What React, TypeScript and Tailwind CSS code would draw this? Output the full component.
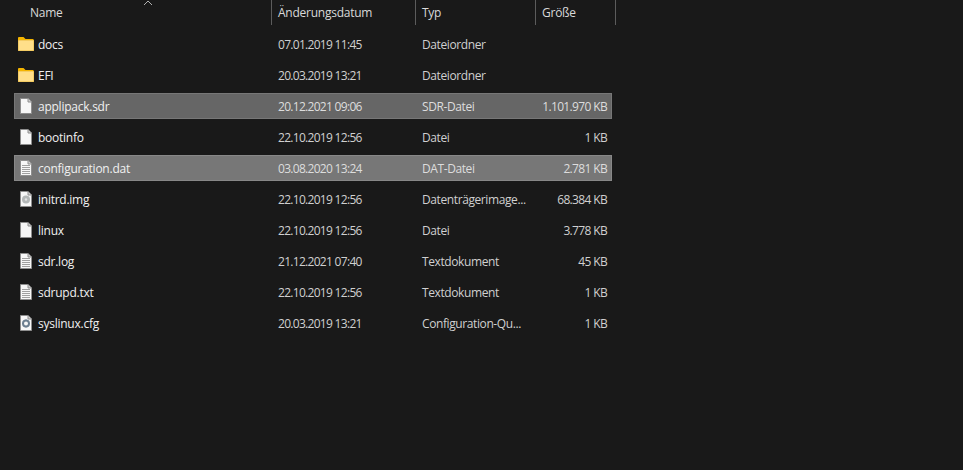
const rows = [
  { name: "docs", date: "07.01.2019 11:45", type: "Dateiordner", size: "", icon: "folder" },
  { name: "EFI", date: "20.03.2019 13:21", type: "Dateiordner", size: "", icon: "folder" },
  { name: "applipack.sdr", date: "20.12.2021 09:06", type: "SDR-Datei", size: "1.101.970 KB", icon: "file", selected: "dark" },
  { name: "bootinfo", date: "22.10.2019 12:56", type: "Datei", size: "1 KB", icon: "file" },
  { name: "configuration.dat", date: "03.08.2020 13:24", type: "DAT-Datei", size: "2.781 KB", icon: "text", selected: "light" },
  { name: "initrd.img", date: "22.10.2019 12:56", type: "Datenträgerimage...", size: "68.384 KB", icon: "disc" },
  { name: "linux", date: "22.10.2019 12:56", type: "Datei", size: "3.778 KB", icon: "file" },
  { name: "sdr.log", date: "21.12.2021 07:40", type: "Textdokument", size: "45 KB", icon: "text" },
  { name: "sdrupd.txt", date: "22.10.2019 12:56", type: "Textdokument", size: "1 KB", icon: "text" },
  { name: "syslinux.cfg", date: "20.03.2019 13:21", type: "Configuration-Qu...", size: "1 KB", icon: "cfg" },
];

function FileIcon({ kind }: { kind: string }) {
  if (kind === "folder") {
    return (
      <svg width="16" height="14" viewBox="0 0 16 14">
        <path d="M0 1 L0.5 0 H5.5 L7.5 2 H15 L16 3 V4 H0 Z" fill="#f4b400" />
        <rect x="0" y="3" width="16" height="11" rx="0.5" fill="#e8b83e" />
        <rect x="0.5" y="3.5" width="15" height="10" fill="#ffdf8a" />
      </svg>
    );
  }
  return (
    <svg width="12" height="16" viewBox="0 0 12 16">
      <path d="M0.5 0.5 H8 L11.5 4 V15.5 H0.5 Z" fill="#f7f7f7" stroke="#8e8e8e" />
      <path d="M8 0.5 V4 H11.5" fill="#d0d0d0" stroke="#8e8e8e" />
      {kind === "text" && (
        <path d="M2 5.5 H10 M2 7.5 H10 M2 9.5 H10 M2 11.5 H10 M2 13.5 H10" stroke="#a0a0a0" strokeWidth="1" />
      )}
      {kind === "disc" && (
        <>
          <circle cx="6" cy="8.5" r="4" fill="#b4b8b8" />
          <circle cx="6" cy="8.5" r="1.2" fill="#e4e4e4" />
        </>
      )}
      {kind === "cfg" && (
        <>
          <circle cx="6" cy="8.5" r="3" fill="none" stroke="#6d7f90" strokeWidth="2" />
          <path d="M6 4.5 V6 M6 11 V12.5 M2 8.5 H3.5 M8.5 8.5 H10" stroke="#6d7f90" strokeWidth="1.2" />
        </>
      )}
    </svg>
  );
}

function HeaderCell({ label, width }: { label: string; width: string }) {
  return (
    <div className={`${width} h-[25px] flex items-center pl-[6px] pt-px border-r border-[#5c5c5c]`}>
      {label}
    </div>
  );
}

export default function App() {
  return (
    <div className="relative w-[963px] h-[470px] bg-[#191919] overflow-hidden text-[12px] font-['Open_Sans',sans-serif] tracking-[-0.25px] text-[#f0f0f0]">
      <div className="flex text-[#d9d9d9] pl-[24px]">
        <HeaderCell label="Name" width="w-[248px]" />
        <HeaderCell label="Änderungsdatum" width="w-[144px]" />
        <HeaderCell label="Typ" width="w-[120px]" />
        <HeaderCell label="Größe" width="w-[80px]" />
      </div>
      <svg className="absolute left-[143px] top-0" width="10" height="6" viewBox="0 0 10 6">
        <path d="M1 5 L5 1 L9 5" fill="none" stroke="#b0b0b0" />
      </svg>
      <div className="pt-[6px] pl-[14px] flex flex-col gap-[5px]">
        {rows.map((row) => (
          <div
            key={row.name}
            className={`w-[598px] h-[26px] flex items-center border ${
              row.selected === "dark"
                ? "bg-[#666666] border-[#777777]"
                : row.selected === "light"
                  ? "bg-[#777777] border-[#888888]"
                  : "border-transparent"
            }`}
          >
            <div className="w-[23px] pr-px flex justify-center shrink-0">
              <FileIcon kind={row.icon} />
            </div>
            <div className="w-[240px] shrink-0 pt-[2px]">{row.name}</div>
            <div className={`w-[144px] shrink-0 pt-[2px] tracking-[-0.7px] ${row.selected ? "text-[#dddddd]" : "text-[#d0d0d0]"}`}>{row.date}</div>
            <div className={`w-[112px] shrink-0 pt-[2px] tracking-[-0.4px] ${row.selected ? "text-[#dddddd]" : "text-[#d0d0d0]"}`}>{row.type}</div>
            <div className={`flex-1 text-right pt-[2px] pr-[4px] tracking-[-0.65px] ${row.selected ? "text-[#dddddd]" : "text-[#d0d0d0]"}`}>{row.size}</div>
          </div>
        ))}
      </div>
    </div>
  );
}
